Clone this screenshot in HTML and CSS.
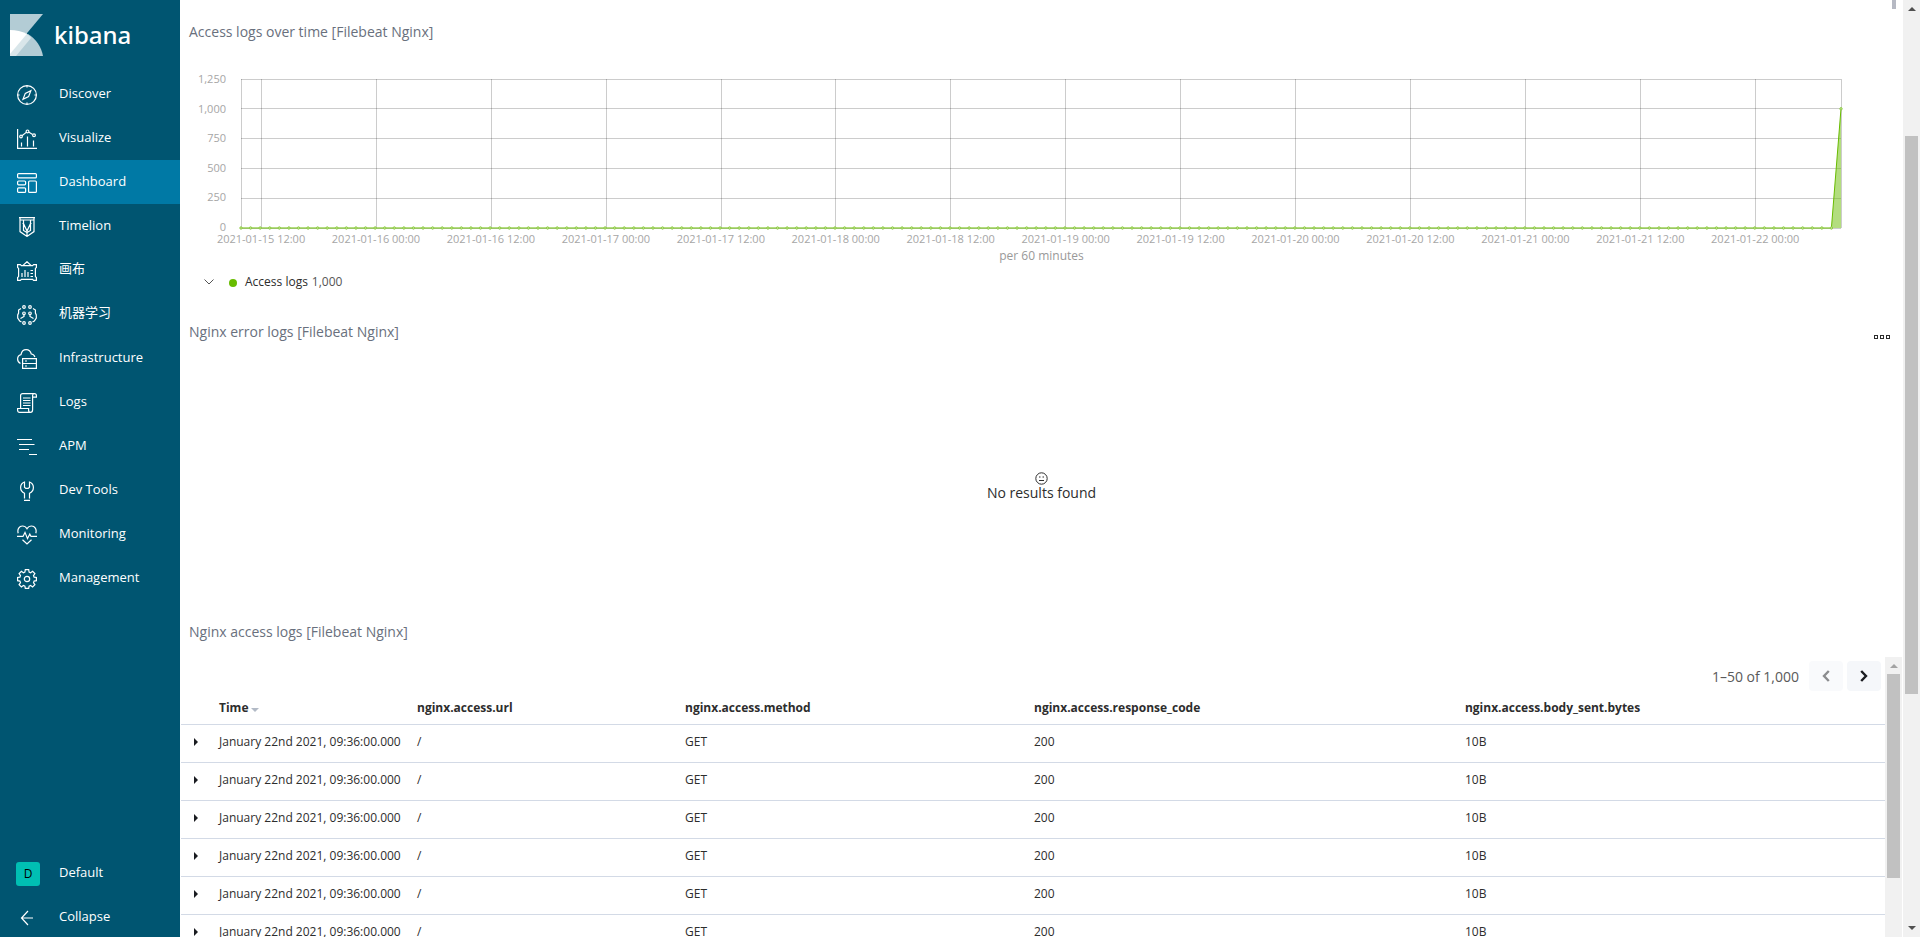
FILE: index.html
```html
<!DOCTYPE html>
<html lang="en">
<head>
<meta charset="utf-8">
<title>Kibana</title>
<link rel="stylesheet" href="styles.css">
</head>
<body>
<div class="app">
  <nav class="sidebar" aria-label="Main">
    <a class="brand" href="#">
      <svg class="brand-mark" viewBox="0 0 33 42" aria-hidden="true">
        <path fill="#b3ccd5" d="M0 0h33L16.500 19.800L0 39z"/>
        <path fill="#b3ccd5" d="M18 20C26 25 31.500 33 33 42H0z"/>
        <path fill="#d9e6ea" d="M0 39L16.200 19L20 22.500L21 24L6 42H0z"/>
        <path fill="#fff" d="M0 16c6 0 12 1.500 16.800 4L0 40z"/>
      </svg>
      <span class="brand-name">kibana</span>
    </a>
    <a class="nav-link" href="#">
      <svg class="icon" viewBox="0 0 20 20" aria-hidden="true"><circle cx="10" cy="10" r="9.400"/><path d="M13.800 5.800L11.600 11.600L6 14.200L8.300 8.400zM10 .6v2M10 17.400v2M.6 10h2M17.400 10h2"/></svg>
      <span>Discover</span></a>
    <a class="nav-link" href="#">
      <svg class="icon" viewBox="0 0 20 20" aria-hidden="true"><path d="M.6 0v19.400H20M4.500 17.500v-4M10.500 17.500V7.500M16.500 17.500v-6M5 6.700L9.200 3.400M12 3.200l3.600 2.300"/><circle cx="4" cy="7.500" r="1.300"/><circle cx="10.500" cy="2.400" r="1.400"/><circle cx="17" cy="6.300" r="1.400"/></svg>
      <span>Visualize</span></a>
    <a class="nav-link nav-link-active" href="#" aria-current="page">
      <svg class="icon" viewBox="0 0 20 20" aria-hidden="true"><rect x=".6" y=".6" width="18.800" height="4.300" rx="1"/><rect x=".6" y="8" width="8" height="3.800" rx="1"/><rect x=".6" y="14.800" width="8" height="4.600" rx="1"/><rect x="11.600" y="8" width="7.800" height="11.400" rx="1"/></svg>
      <span>Dashboard</span></a>
    <a class="nav-link" href="#">
      <svg class="icon" viewBox="0 0 20 20" aria-hidden="true"><path d="M2 .6h16M2.600 3h14.800M3 .6v14l7 4.800 7-4.800V.6M6.500 3v3.500H5.500M13.500 3v3.500h1M6.500 6.500L10 14l3.500-7.500M6.500 6.500v7l3.500 2 3.500-2v-7M10 14v5"/></svg>
      <span>Timelion</span></a>
    <a class="nav-link" href="#">
      <svg class="icon" viewBox="0 0 20 20" aria-hidden="true"><path d="M.6 3.600h2.800l1 1h11.200l1-1h2.800v2.800l-1 1v8.200l1 1v2.800h-2.800l-1-1H4.400l-1 1H.6v-2.800l1-1V7.400l-1-1zM6 4.400L10 .7l4 3.700M5 16v-4M8 16V9M11 16v-5M13.500 9.500h2.500M13.500 12.500h2.500M13.500 15.500h2.500"/></svg>
      <span class="cjk">画布</span></a>
    <a class="nav-link" href="#">
      <svg class="icon" viewBox="0 0 20 20" aria-hidden="true"><circle cx="7" cy="2" r="1.300"/><circle cx="13" cy="2" r="1.300"/><circle cx="7" cy="8.300" r="1.300"/><circle cx="13" cy="8.300" r="1.300"/><circle cx="7" cy="18" r="1.300"/><circle cx="13" cy="18" r="1.300"/><path d="M4 3.500L1.600 5v3L.7 10v3l2 3L4.500 17M16 3.500L18.400 5v3l.9 2v3l-2 3-1.800 1M7 10v1.500L3.500 13.500M13 10v1.500l3.500 2"/></svg>
      <span class="cjk">机器学习</span></a>
    <a class="nav-link" href="#">
      <svg class="icon" viewBox="0 0 20 20" aria-hidden="true"><path d="M3.500 14.500C1.700 13.700.6 12 .6 10c0-2.400 1.600-4 3.400-4.400C4.600 2.600 6.600.7 9.200.7c2.500 0 4.400 1.600 5.100 4.300 1.800.2 3 1.200 3.600 3"/><path d="M5.600 9.600h13.800v9.800H5.600zM5.600 14.500h13.800M8 12h2M8 17h2"/></svg>
      <span>Infrastructure</span></a>
    <a class="nav-link" href="#">
      <svg class="icon" viewBox="0 0 20 20" aria-hidden="true"><path d="M3.600 15.500V2.600c0-1.300.8-2 2-2h11.800c1.300 0 2 .8 2 2v1.600h-3.800v12.600c0 1.600-.8 2.600-2.200 2.600H2.600c-1.200 0-2-.9-2-2.200v-1.700h11v1.700c0 1.400.8 2.200 2 2.200M15.600 4.200V2.500c0-1.100.5-1.900 1.500-1.900M6 5h7.500M6 7.500h7.500M6 10h7.500M6 12.500h7.500"/></svg>
      <span>Logs</span></a>
    <a class="nav-link" href="#">
      <svg class="icon" viewBox="0 0 20 20" aria-hidden="true"><path d="M0 2.500h15M2 7.500h15.500M2 12.500h10M12 17.500h8"/></svg>
      <span>APM</span></a>
    <a class="nav-link" href="#">
      <svg class="icon" viewBox="0 0 20 20" aria-hidden="true"><path d="M7.500 17.500v-5.200C5 11.200 3.600 9.300 3.600 6.600c0-2.600 1.300-4.600 3.900-5.600v5.200l1.300 1.200h2.400l1.300-1.200V1c2.600 1 3.900 3 3.900 5.600 0 2.700-1.400 4.600-3.900 5.700v5.200M7 19.400h6"/></svg>
      <span>Dev Tools</span></a>
    <a class="nav-link" href="#">
      <svg class="icon" viewBox="0 0 20 20" aria-hidden="true"><path d="M1.200 8.200C0 4.300 2.300 1 5.400 1 7.400 1 9 2 10 3.700 11 2 12.600 1 14.600 1c3.100 0 5.400 3.300 4.200 7.200M0 11.400h6l2-4 2.500 6.200 2.300-4.600 1.200 2.400h6M5.500 14.800L10 19l4.500-4.200"/></svg>
      <span>Monitoring</span></a>
    <a class="nav-link" href="#">
      <svg class="icon" viewBox="0 0 20 20" aria-hidden="true"><circle cx="10" cy="10" r="2.700"/><path d="M8.300.7h3.400l.4 2.400 1.500.6 2-1.400 2.300 2.300-1.400 2 .6 1.500 2.300.4v3.200l-2.300.4-.6 1.500 1.400 2-2.300 2.300-2-1.400-1.500.6-.4 2.200H8.300l-.4-2.200-1.500-.6-2 1.400-2.300-2.300 1.400-2-.6-1.500-2.300-.4V8.500l2.300-.4.6-1.500-1.400-2 2.300-2.300 2 1.400 1.500-.6z"/></svg>
      <span>Management</span></a>
    <div class="nav-foot">
      <a class="nav-link" href="#"><span class="space-badge">D</span><span>Default</span></a>
      <button class="nav-link" type="button">
        <svg class="icon" viewBox="0 0 20 20" aria-hidden="true"><path d="M16 10H4.500M11 3L4.500 10l6.500 7"/></svg>
        <span>Collapse</span></button>
    </div>
  </nav>

  <main class="dashboard">
    <section class="panel">
      <h2 class="panel-title">Access logs over time [Filebeat Nginx]</h2>
      <div class="chart">
        <div class="y-axis"><span>1,250</span><span>1,000</span><span>750</span><span>500</span><span>250</span><span>0</span></div>
        <div class="plot-col">
          <svg class="plot" id="plot" role="img" aria-label="Access logs per 60 minutes">
            <g id="grid" class="grid-lines"></g>
            <svg viewBox="0 0 167 1250" preserveAspectRatio="none" width="100%" height="100%">
              <path class="series-area" d="M0 1250H166L167 250V1250z"/>
              <path class="series-line" d="M0 1250H166L167 250"/>
            </svg>
            <g id="dots" class="dots"></g>
          </svg>
          <div class="x-axis">
            <span>2021-01-15 12:00</span><span>2021-01-16 00:00</span><span>2021-01-16 12:00</span><span>2021-01-17 00:00</span><span>2021-01-17 12:00</span><span>2021-01-18 00:00</span><span>2021-01-18 12:00</span><span>2021-01-19 00:00</span><span>2021-01-19 12:00</span><span>2021-01-20 00:00</span><span>2021-01-20 12:00</span><span>2021-01-21 00:00</span><span>2021-01-21 12:00</span><span>2021-01-22 00:00</span>
          </div>
        </div>
      </div>
      <p class="axis-title">per 60 minutes</p>
      <div class="legend">
        <button class="legend-toggle" type="button" aria-label="Toggle legend"><svg width="10" height="6" viewBox="0 0 10 6"><path d="M.5.500L5 5L9.500.500"/></svg></button>
        <span class="legend-dot"></span>
        <span class="legend-name">Access logs</span>
        <span class="legend-value">1,000</span>
      </div>
    </section>

    <section class="panel">
      <header class="panel-head">
        <h2 class="panel-title">Nginx error logs [Filebeat Nginx]</h2>
        <button class="panel-menu" type="button" aria-label="Panel options"><i></i><i></i><i></i></button>
      </header>
      <div class="empty">
        <svg width="13" height="13" viewBox="0 0 13 13" aria-hidden="true"><circle cx="6.500" cy="6.500" r="5.700"/><path d="M4 8.500h5M4 5h1.500M7.500 5H9"/></svg>
        <p>No results found</p>
      </div>
    </section>

    <section class="panel panel-table">
      <h2 class="panel-title">Nginx access logs [Filebeat Nginx]</h2>
      <div class="table-scroll">
        <div class="table-body">
          <div class="pager">
            <span>1–50 of 1,000</span>
            <button type="button" aria-label="Previous page" disabled><svg width="8" height="12" viewBox="0 0 8 12"><path d="M6.800 1L2 6l4.800 5"/></svg></button>
            <button type="button" aria-label="Next page"><svg width="8" height="12" viewBox="0 0 8 12"><path d="M1.200 1L6 6l-4.800 5"/></svg></button>
          </div>
          <table class="docs">
            <colgroup><col class="c-open"><col class="c-time"><col class="c-url"><col class="c-method"><col class="c-code"><col></colgroup>
            <thead><tr><th></th><th>Time<span class="sort"></span></th><th>nginx.access.url</th><th>nginx.access.method</th><th>nginx.access.response_code</th><th>nginx.access.body_sent.bytes</th></tr></thead>
            <tbody>
              <tr><td><button class="expand" type="button" aria-label="Expand row"></button></td><td>January 22nd 2021, 09:36:00.000</td><td>/</td><td>GET</td><td>200</td><td>10B</td></tr>
              <tr><td><button class="expand" type="button" aria-label="Expand row"></button></td><td>January 22nd 2021, 09:36:00.000</td><td>/</td><td>GET</td><td>200</td><td>10B</td></tr>
              <tr><td><button class="expand" type="button" aria-label="Expand row"></button></td><td>January 22nd 2021, 09:36:00.000</td><td>/</td><td>GET</td><td>200</td><td>10B</td></tr>
              <tr><td><button class="expand" type="button" aria-label="Expand row"></button></td><td>January 22nd 2021, 09:36:00.000</td><td>/</td><td>GET</td><td>200</td><td>10B</td></tr>
              <tr><td><button class="expand" type="button" aria-label="Expand row"></button></td><td>January 22nd 2021, 09:36:00.000</td><td>/</td><td>GET</td><td>200</td><td>10B</td></tr>
              <tr><td><button class="expand" type="button" aria-label="Expand row"></button></td><td>January 22nd 2021, 09:36:00.000</td><td>/</td><td>GET</td><td>200</td><td>10B</td></tr>
            </tbody>
          </table>
        </div>
        <div class="scrollbar scrollbar-inner" aria-hidden="true"><span class="arrow arrow-up arrow-off"></span><span class="thumb"></span></div>
      </div>
    </section>
    <span class="edge-mark"></span>
  </main>

  <div class="scrollbar scrollbar-page" aria-hidden="true"><span class="arrow arrow-up"></span><span class="thumb"></span><span class="arrow arrow-down"></span></div>
</div>
<script src="chart.js"></script>
</body>
</html>
```
FILE: styles.css
```css
* { box-sizing: border-box; }
body {
  margin: 0;
  font-family: "Open Sans", "Noto Sans CJK SC", sans-serif;
  font-size: 14px;
  color: #2d2d2d;
  background: #fff;
}
h2, p { margin: 0; font-weight: 400; }
button { font: inherit; border: 0; padding: 0; background: none; color: inherit; cursor: pointer; }
a { color: inherit; text-decoration: none; }
.app { display: flex; height: 100vh; overflow: hidden; }

/* Sidebar */
.sidebar { flex: 0 0 180px; display: flex; flex-direction: column; background: #005571; color: #fff; }
.brand { display: flex; align-items: center; gap: 11px; height: 72px; padding: 0 10px 2px; }
.brand-mark { width: 33px; height: 42px; }
.brand-name { font-family: "Noto Sans", sans-serif; font-size: 24px; font-weight: 500; line-height: 32px; }
.nav-link { display: flex; align-items: center; gap: 22px; width: 100%; height: 44px; padding-left: 17px; font-size: 13px; line-height: 20px; text-align: left; }
.nav-link > span:last-child { padding-bottom: 2px; }
.nav-link > .cjk:last-child { padding-bottom: 4px; }
.nav-link-active { background: #0079a5; }
.icon { flex: none; width: 20px; height: 20px; margin-top: 2px; fill: none; stroke: #fff; stroke-width: 1.2; }
.nav-foot { margin: auto 0 -2px; }
.space-badge { flex: none; width: 24px; height: 24px; margin: 2px -3px 0 -1px; border-radius: 3px; background: #00bfb3; color: #000; font-size: 12px; line-height: 24px; text-align: center; }

/* Dashboard panels */
.dashboard { position: relative; flex: 1; min-width: 0; display: flex; flex-direction: column; padding: 20px 1px 0; }
.panel { flex: 0 0 300px; display: flex; flex-direction: column; min-height: 0; }
.panel-table { flex: 1 1 0; }
.panel-head { display: flex; justify-content: space-between; padding-right: 12px; }
.panel-title { padding-left: 8px; font-size: 14px; line-height: 24px; color: #69707d; }
.panel-menu { display: flex; align-items: center; gap: 2px; padding-top: 10px; }
.panel-menu i { width: 4px; height: 4px; border: 1px solid #2d2d2d; }
.edge-mark { position: absolute; top: 0; right: 7px; width: 4px; height: 9px; background: #b6b9c3; }

/* Area chart */
.chart { display: flex; gap: 15px; margin: 35px 61px 0 8px; color: #a6a6a6; font-size: 11px; line-height: 16px; }
.y-axis { display: flex; flex-direction: column; justify-content: space-between; width: 37px; height: 164px; margin-top: -8px; text-align: right; }
.plot-col { flex: 1; min-width: 0; }
.plot { display: block; width: 100%; height: 149px; overflow: visible; }
.plot svg { overflow: visible; }
.grid-lines { stroke: #000; stroke-opacity: .2; stroke-width: 1; shape-rendering: crispEdges; }
.series-area { fill: #68bc00; fill-opacity: .5; }
.series-line { fill: none; stroke: #68bc00; stroke-width: 1; vector-effect: non-scaling-stroke; }
.dots { fill: #c3e49a; stroke: #8fcc45; stroke-width: 1; }
.x-axis { display: flex; margin: 3px 0 0 -2.340%; }
.x-axis span { flex: 0 0 7.020%; text-align: center; white-space: nowrap; }
.axis-title { padding-top: 1px; text-align: center; font-size: 12px; line-height: 16px; color: #999; }
.legend { display: flex; align-items: center; padding: 10px 0 0 23px; font-size: 12px; line-height: 16px; }
.legend-toggle { display: flex; margin-right: 15px; }
.legend-toggle path { fill: none; stroke: #555; }
.legend-dot { width: 8px; height: 8px; margin: 2px 8px 0 0; border-radius: 4px; background: #68bc00; }
.legend-value { margin-left: 4px; color: #555; }

/* Empty state */
.empty { flex: 1; display: flex; flex-direction: column; align-items: center; justify-content: center; padding-top: 8px; line-height: 16px; }
.empty svg { fill: none; stroke: #2d2d2d; }

/* Documents table */
.table-scroll { flex: 1; min-height: 0; display: flex; margin-top: 13px; overflow: hidden; }
.table-body { flex: 1; min-width: 0; }
.pager { display: flex; align-items: center; justify-content: flex-end; gap: 4px; padding: 4px 4px 0 0; color: #5a5a5a; line-height: 20px; }
.pager span { margin-right: 6px; padding-top: 2px; }
.pager button { display: flex; align-items: center; justify-content: center; width: 34px; height: 30px; border-radius: 4px; background: #f5f7fa; }
.pager path { fill: none; stroke: #1a1c21; stroke-width: 2.4; }
.pager button:disabled { opacity: .5; }
.docs { width: 100%; table-layout: fixed; border-collapse: collapse; font-size: 12px; line-height: 18px; }
.docs th, .docs td { padding: 8px 8px 11px; text-align: left; white-space: nowrap; border-bottom: 1px solid #d3dae6; }
.docs th { padding: 8px 8px 7px; font-weight: 700; }
.docs td:first-child { padding-left: 13px; }
.c-open { width: 30px; }
.c-time { width: 198px; }
.c-url { width: 15.730%; }
.c-method { width: 20.480%; }
.c-code { width: 25.290%; }
.sort { display: inline-block; margin-left: 3px; border: 4px solid transparent; border-top-color: #b2bac6; border-bottom: 0; }
.expand { display: block; border: 4px solid transparent; border-left-color: #1a1c21; border-right: 0; }

/* Scrollbars */
.scrollbar { flex: none; width: 17px; display: flex; flex-direction: column; align-items: center; background: #f1f1f1; }
.arrow { border: 0 solid transparent; border-width: 4px; }
.arrow-up { margin-top: 7px; border-top-width: 0; border-bottom-color: #505050; }
.arrow-off { border-bottom-color: #a3a3a3; }
.arrow-down { margin: auto 0 7px; border-bottom-width: 0; border-top-color: #505050; }
.thumb { width: 13px; background: #c1c1c1; }
.scrollbar-page .thumb { height: 59.500%; margin-top: 125px; }
.scrollbar-inner .thumb { height: 204px; margin-top: 6px; }
```
FILE: chart.js
```js
const NS = 'http://www.w3.org/2000/svg';
const HOURS = 167;

function add(parent, name, attrs) {
  const el = document.createElementNS(NS, name);
  for (const key in attrs) el.setAttribute(key, attrs[key]);
  parent.appendChild(el);
}

const grid = document.getElementById('grid');
const dots = document.getElementById('dots');
const pct = hour => (hour / HOURS * 100) + '%';

for (let i = 0; i <= 5; i++) {
  add(grid, 'line', { x1: 0, x2: '100%', y1: i * 20 + '%', y2: i * 20 + '%' });
}
for (const hour of [0, HOURS]) add(grid, 'line', { x1: pct(hour), x2: pct(hour), y1: 0, y2: '100%' });
for (let hour = 2.1; hour < HOURS; hour += 12) {
  add(grid, 'line', { x1: pct(hour), x2: pct(hour), y1: 0, y2: '100%' });
}
for (let hour = 0; hour <= HOURS; hour++) {
  add(dots, 'circle', { cx: pct(hour), cy: hour === HOURS ? '20%' : '100%', r: 1.2 });
}
```
